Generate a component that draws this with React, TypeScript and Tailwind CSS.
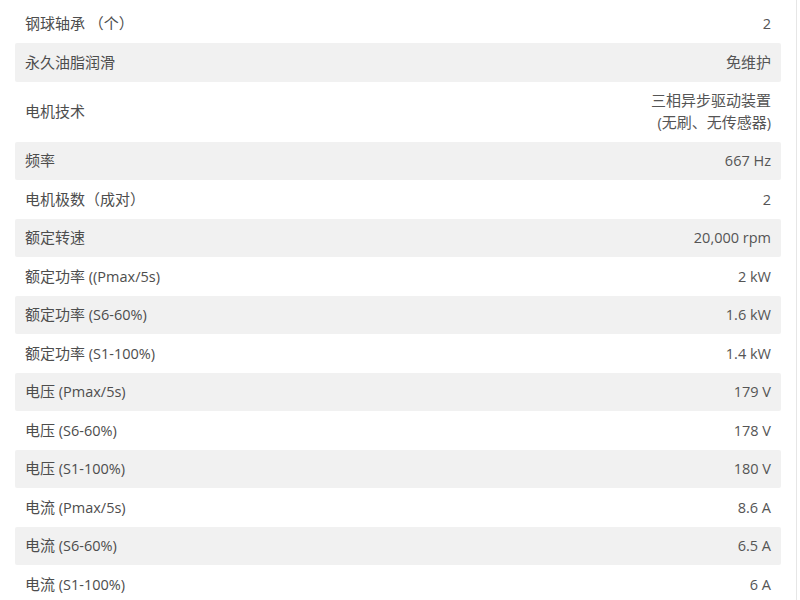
import React from "react";

const rows: [string, string[]][] = [
  ["钢球轴承 （个）", ["2"]],
  ["永久油脂润滑", ["免维护"]],
  ["电机技术", ["三相异步驱动装置", "(无刷、无传感器)"]],
  ["频率", ["667 Hz"]],
  ["电机极数（成对）", ["2"]],
  ["额定转速", ["20,000 rpm"]],
  ["额定功率 ((Pmax/5s)", ["2 kW"]],
  ["额定功率 (S6-60%)", ["1.6 kW"]],
  ["额定功率 (S1-100%)", ["1.4 kW"]],
  ["电压 (Pmax/5s)", ["179 V"]],
  ["电压 (S6-60%)", ["178 V"]],
  ["电压 (S1-100%)", ["180 V"]],
  ["电流 (Pmax/5s)", ["8.6 A"]],
  ["电流 (S6-60%)", ["6.5 A"]],
  ["电流 (S1-100%)", ["6 A"]],
];

// CJK glyphs render a touch larger than the latin ones in the source
function Mixed({ text }: { text: string }) {
  const parts = text.match(/[\u3000-\u9fff\uff00-\uffef]+|[^\u3000-\u9fff\uff00-\uffef]+/g) || [];
  return (
    <>
      {parts.map((p, i) =>
        /[\u3000-\u9fff\uff00-\uffef]/.test(p) ? (
          <span key={i} className="text-[15px]">
            {p}
          </span>
        ) : (
          <span key={i}>{p}</span>
        )
      )}
    </>
  );
}

export default function App() {
  return (
    <div
      className="flex w-[800px] h-[600px] overflow-hidden bg-white"
      style={{ fontFamily: '"Open Sans", "Noto Sans CJK SC", sans-serif' }}
    >
      <div className="w-[781px] pl-[15px] pt-[4.5px] shrink-0">
        {rows.map(([label, value], i) => (
          <div
            key={i}
            className={
              "flex justify-between items-center px-[10px] py-[8.5px] text-[14.5px] leading-[21.5px] rounded-[2px] " +
              (i % 2 === 1 ? "bg-[#f1f1f1]" : "bg-white")
            }
          >
            <div className="text-[#4d4d4d]">
              <Mixed text={label} />
            </div>
            <div className="text-right text-[#555555]">
              {value.map((v, j) => (
                <div key={j}>
                  <Mixed text={v} />
                </div>
              ))}
            </div>
          </div>
        ))}
      </div>
      <div className="w-[15px] shrink-0" />
      <div className="w-px h-full bg-[#e6e6e6] shrink-0" />
    </div>
  );
}
